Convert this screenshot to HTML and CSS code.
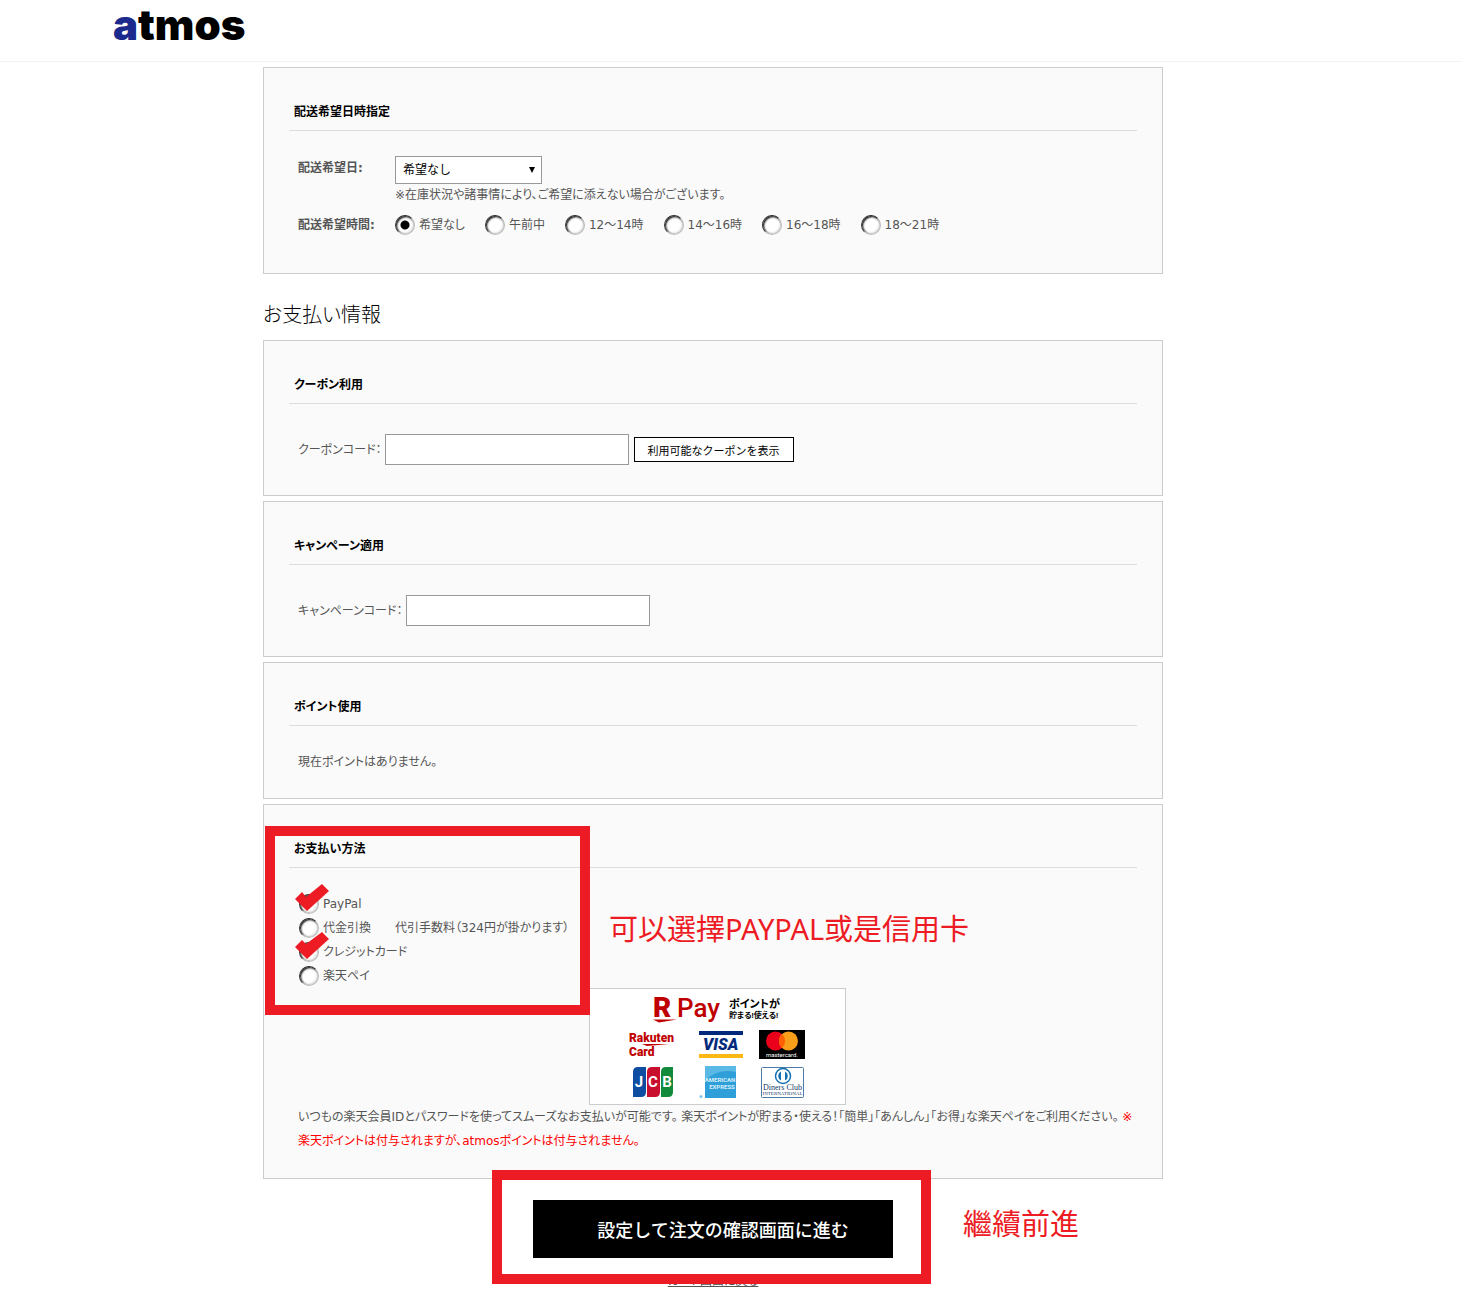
FILE: index.html
```html
<!DOCTYPE html>
<html lang="ja">
<head>
<meta charset="UTF-8">
<meta name="viewport" content="width=device-width, initial-scale=1.0">
<title>お支払い情報 | atmos</title>
<link rel="stylesheet" href="styles.css">
</head>
<body>
<header id="header">
	<div class="header-inner">
		<a href="#" class="logo"><span>a</span>tmos</a>
	</div>
</header>

<form id="main" action="#" method="post">

	<!-- delivery date -->
	<section class="box">
		<h3>配送希望日時指定</h3>
		<div class="delivery">
			<label class="name" for="deliveryDate">配送希望日:</label>
			<div>
				<div class="select-wrap">
					<select id="deliveryDate">
						<option>希望なし</option>
					</select>
				</div>
				<p class="note">※在庫状況や諸事情により、ご希望に添えない場合がございます。</p>
			</div>
			<span class="name">配送希望時間:</span>
			<div class="times">
				<label><input type="radio" name="time" checked>希望なし</label>
				<label><input type="radio" name="time">午前中</label>
				<label><input type="radio" name="time">12～14時</label>
				<label><input type="radio" name="time">14～16時</label>
				<label><input type="radio" name="time">16～18時</label>
				<label><input type="radio" name="time">18～21時</label>
			</div>
		</div>
	</section>

	<h2>お支払い情報</h2>

	<!-- coupon -->
	<section class="box">
		<h3>クーポン利用</h3>
		<div class="code">
			<label for="coupon">クーポンコード：</label>
			<input type="text" id="coupon">
			<button type="button" class="btn-coupon">利用可能なクーポンを表示</button>
		</div>
	</section>

	<!-- campaign -->
	<section class="box">
		<h3>キャンペーン適用</h3>
		<div class="code">
			<label for="campaign">キャンペーンコード：</label>
			<input type="text" id="campaign">
		</div>
	</section>

	<!-- point -->
	<section class="box">
		<h3>ポイント使用</h3>
		<p class="point">現在ポイントはありません。</p>
	</section>

	<!-- payment -->
	<section class="box">
		<h3>お支払い方法</h3>
		<ul class="payment">
			<li>
				<label><input type="radio" name="pay">PayPal</label>
				<svg class="check" width="34" height="27" viewBox="0 0 34 27"><polygon points="0,15 7,8 11,13 27,0 34,7 12,27" fill="#ed1c24"/></svg>
			</li>
			<li>
				<label><input type="radio" name="pay">代金引換</label>
				<span class="fee">代引手数料（324円が掛かります）</span>
			</li>
			<li>
				<label><input type="radio" name="pay">クレジットカード</label>
				<svg class="check" width="34" height="27" viewBox="0 0 34 27"><polygon points="0,15 7,8 11,12 27,0 34,7 12,27" fill="#ed1c24"/></svg>
			</li>
			<li>
				<label><input type="radio" name="pay">楽天ペイ</label>
			</li>
		</ul>
		<div class="rpay">
			<svg width="257" height="117" viewBox="0 0 257 117" role="img" aria-label="R Pay">
				<rect x="0.5" y="0.5" width="256" height="116" fill="#fff" stroke="#ccc"/>
				<!-- R Pay -->
				<text x="64" y="29" class="r-mark">R</text>
				<path d="M64 31.500H88L70 34.500Z" fill="#bf0000"/>
				<text x="88" y="29" class="r-pay">Pay</text>
				<text x="140" y="20" class="r-copy">ポイントが</text>
				<text x="140" y="30" class="r-copy2">貯まる!使える!</text>
				<!-- Rakuten Card -->
				<text x="40" y="54" class="r-card">Rakuten</text>
				<text x="40" y="68" class="r-card">Card</text>
				<path d="M53 56H80L58 58Z" fill="#bf0000"/>
				<!-- VISA -->
				<rect x="110" y="43" width="44" height="4" fill="#00297b"/>
				<rect x="110" y="66" width="44" height="4" fill="#fdb813"/>
				<text x="114" y="62" class="visa">VISA</text>
				<!-- mastercard -->
				<rect x="170" y="42" width="46" height="29" fill="#000"/>
				<circle cx="186.500" cy="53" r="9.500" fill="#eb001b"/>
				<circle cx="199.500" cy="53" r="9.500" fill="#f79e1b"/>
				<path d="M193 46A9.500 9.500 0 0 1 193 60A9.500 9.500 0 0 1 193 46Z" fill="#ff5f00"/>
				<text x="193" y="69" class="master">mastercard.</text>
				<!-- JCB -->
				<path d="M49 79H57V104Q57 109 52 109H44V84Q44 79 49 79Z" fill="#0f4da2"/>
				<path d="M63 79H71V104Q71 109 66 109H58V84Q58 79 63 79Z" fill="#c8102e"/>
				<path d="M77 79H84V104Q84 109 79 109H72V84Q72 79 77 79Z" fill="#128a3c"/>
				<text x="50" y="99" class="jcb">J</text>
				<text x="64" y="99" class="jcb">C</text>
				<text x="78" y="99" class="jcb">B</text>
				<!-- AMERICAN EXPRESS -->
				<rect x="116" y="78" width="31" height="32" fill="#2e9fd8"/>
				<path d="M116 78H147V84Q130 80 116 92Z" fill="#5bb9e6"/>
				<text x="131" y="94" class="amex">AMERICAN</text>
				<text x="133" y="101" class="amex">EXPRESS</text>
				<circle cx="112" cy="108.500" r="1.500" fill="#7fc4e8"/>
				<!-- Diners Club -->
				<rect x="172.500" y="79.500" width="42" height="30" rx="1" fill="#fff" stroke="#4a7aa5"/>
				<circle cx="194" cy="88" r="7.500" fill="#fff" stroke="#1470b0" stroke-width="1.500"/>
				<path d="M192 83.500A5 5 0 0 0 192 92.500ZM196 83.500A5 5 0 0 1 196 92.500Z" fill="#1470b0"/>
				<text x="193.500" y="102" class="diners">Diners Club</text>
				<text x="193.500" y="107" class="diners-s">INTERNATIONAL</text>
			</svg>
		</div>
		<p class="pay-text">いつもの楽天会員IDとパスワードを使ってスムーズなお支払いが可能です。 楽天ポイントが貯まる・使える！「簡単」「あんしん」「お得」な楽天ペイをご利用ください。 <span class="red">※<br>楽天ポイントは付与されますが、atmosポイントは付与されません。</span></p>
		<div class="frame frame-pay"></div>
		<p class="memo memo-pay">可以選擇PAYPAL或是信用卡</p>
	</section>

	<!-- submit -->
	<div class="submit">
		<button type="submit">設定して注文の確認画面に進む</button>
		<a href="#">カート画面に戻る</a>
		<div class="frame frame-submit"></div>
		<p class="memo memo-submit">繼續前進</p>
	</div>
</form>
</body>
</html>
```
FILE: styles.css
```css
*
{
	box-sizing: border-box;
}

body
{
	margin: 0;
	color: #555;
	background-color: #fff;
	font-family: "DejaVu Sans", "Noto Sans CJK JP", sans-serif;
	font-size: 12px;
	line-height: 24px;
	font-feature-settings: "palt";
}

h2, h3, p, ul
{
	margin: 0;
	padding: 0;
}

input, select, button
{
	font-family: inherit;
	font-size: 12px;
	margin: 0;
	border-radius: 0;
}

/* header */
#header
{
	height: 62px;
	padding-right: 36px;
	border-bottom: 1px solid #f3f3f3;
}

.header-inner
{
	max-width: 1200px;
	margin: 0 auto;
}

.logo
{
	display: inline-block;
	color: #000;
	font-family: Inter, sans-serif;
	font-size: 42px;
	font-weight: 900;
	line-height: 50px;
	text-decoration: none;
}

.logo span
{
	color: #1b2a8c;
}

#main
{
	padding: 5px 36px 20px 0;
}

h2
{
	max-width: 900px;
	margin: 26px auto 10px;
	color: #000;
	font-size: 20px;
	font-weight: 300;
	line-height: 30px;
}

/* boxes */
.box
{
	position: relative;
	max-width: 900px;
	margin: 0 auto 5px;
	padding: 0 25px;
	border: 1px solid #ccc;
	background-color: #fafafa;
}

h3
{
	padding: 32px 5px 6px;
	border-bottom: 1px solid #ddd;
	color: #000;
	font-size: 12px;
	font-weight: bold;
}

.delivery
{
	display: grid;
	grid-template-columns: 97px 1fr;
	row-gap: 7px;
	padding: 25px 9px 36px;
}

.name
{
	font-weight: bold;
}

.select-wrap
{
	position: relative;
	width: 147px;
}

.select-wrap:after
{
	content: "";
	position: absolute;
	top: 11px;
	right: 7px;
	border: 3px solid transparent;
	border-top: 6px solid #000;
	border-bottom: 0;
}

select
{
	display: block;
	width: 100%;
	height: 28px;
	padding: 0 7px;
	border: 1px solid #999;
	background-color: #fff;
	color: #000;
	-webkit-appearance: none;
	appearance: none;
}

.note
{
	line-height: 22px;
}

.times
{
	display: flex;
	flex-wrap: wrap;
	gap: 20px;
}

.times label, .payment label
{
	display: flex;
	align-items: center;
	gap: 4px;
}

input[type="radio"]
{
	-webkit-appearance: none;
	appearance: none;
	width: 20px;
	height: 20px;
	border: 1px solid;
	border-color: #222 #bbb #bbb #333;
	border-radius: 50%;
	background-color: #fff;
	box-shadow: inset 1px 1px 2px #000, inset -1px -1px 2px #ddd;
}

input[type="radio"]:checked
{
	background-image: radial-gradient(circle, #000 4px, transparent 5px);
}

.code
{
	display: flex;
	align-items: center;
	gap: 5px;
	padding: 30px 9px;
}

.code label
{
	margin-right: -2px;
}

input[type="text"]
{
	width: 244px;
	height: 31px;
	padding: 0 8px;
	border: 1px solid #999;
	background-color: #fff;
}

.btn-coupon
{
	width: 160px;
	height: 25px;
	padding: 0;
	border: 1px solid #000;
	background-color: #fff;
	color: #000;
	font-size: 11px;
	font-feature-settings: normal;
}

.point
{
	padding: 24px 9px;
}

/* payment */
.payment
{
	padding: 24px 10px 0;
	list-style: none;
}

.payment li
{
	display: flex;
	gap: 24px;
	position: relative;
}

.check
{
	position: absolute;
	top: -8px;
	left: -4px;
}

.rpay
{
	padding-left: 300px;
}

.rpay svg
{
	display: block;
	font-family: Roboto, "Noto Sans CJK JP", sans-serif;
}

.r-mark { font-size: 28px; font-weight: 900; fill: #bf0000; }
.r-pay { font-size: 26px; font-weight: 500; fill: #bf0000; }
.r-copy { font-size: 11px; font-weight: bold; fill: #000; }
.r-copy2 { font-size: 8px; font-weight: bold; fill: #000; }
.r-card { font-size: 12px; font-weight: 900; fill: #bf0000; }
.visa { font-size: 16px; font-weight: 900; font-style: italic; fill: #00297b; }
.master { font-size: 6px; fill: #fff; text-anchor: middle; }
.jcb { font-size: 15px; font-weight: bold; fill: #fff; text-anchor: middle; }
.amex { font-size: 6px; font-weight: bold; fill: #d8eefa; text-anchor: middle; }
.diners { font-family: "Liberation Serif", serif; font-size: 8px; fill: #14396a; text-anchor: middle; }
.diners-s { font-family: "Liberation Serif", serif; font-size: 5px; fill: #14396a; text-anchor: middle; }

.pay-text
{
	padding: 0 0 25px 9px;
}

.red
{
	color: #f00;
}

/* submit */
.submit
{
	display: flex;
	flex-direction: column;
	align-items: center;
	position: relative;
	max-width: 900px;
	margin: 0 auto;
	padding-top: 16px;
}

.submit button
{
	width: 360px;
	height: 58px;
	padding: 0 0 0 20px;
	border: 0;
	background-color: #000;
	color: #fff;
	font-size: 18px;
	font-weight: 500;
	font-feature-settings: normal;
}

.submit a
{
	margin-top: 11px;
	color: #555;
}

/* red pen */
.frame
{
	position: absolute;
	border: 10px solid #ed1c24;
	pointer-events: none;
}

.frame-pay
{
	top: 21px;
	left: 1px;
	width: 325px;
	height: 189px;
}

.frame-submit
{
	top: -14px;
	left: 229px;
	width: 439px;
	height: 114px;
}

.memo
{
	position: absolute;
	color: #ed1c24;
	font-family: "Noto Sans", "Noto Sans CJK TC", sans-serif;
	font-size: 29px;
	font-weight: 400;
	line-height: 40px;
	font-feature-settings: normal;
	white-space: nowrap;
}

.memo-pay
{
	top: 104px;
	left: 345px;
}

.memo-submit
{
	top: 20px;
	left: 700px;
}
```
